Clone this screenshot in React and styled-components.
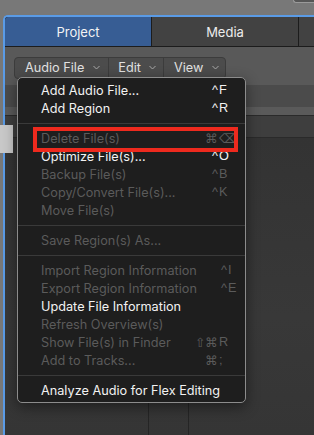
import styled, { createGlobalStyle } from "styled-components";

const GlobalStyle = createGlobalStyle`
  html, body {
    margin: 0;
    padding: 0;
    background: #787878;
  }
  body {
    font-family: Inter, "Liberation Sans", "DejaVu Sans", sans-serif;
    -webkit-font-smoothing: antialiased;
  }
`;

const Screen = styled.div`
  position: relative;
  width: 314px;
  height: 435px;
  overflow: hidden;
  display: flex;
  flex-direction: column;
  background: #787878;
`;

const TopStrip = styled.div`
  height: 15px;
  flex: none;
  display: flex;
  justify-content: flex-end;
  align-items: flex-start;
`;

const OtherWindow = styled.div`
  width: 20px;
  height: 2px;
  background: #565656;
  border: 1px solid #9a9a9a;
  border-top: none;
  border-right: none;
  border-bottom-left-radius: 4px;
`;

const Window = styled.div`
  flex: 1;
  margin-left: 3px;
  border-left: 2px solid #5a9be6;
  border-top: 2px solid #5a9be6;
  border-top-left-radius: 5px;
  background: #343434;
  display: flex;
  flex-direction: column;
  overflow: hidden;
`;

const TabBar = styled.div`
  height: 29px;
  flex: none;
  display: grid;
  grid-template-columns: 146px 146px 1fr;
  gap: 1px;
  background: #1c1c1c;
  border-bottom: 1px solid #1c1c1c;
`;

const Tab = styled.div`
  display: flex;
  align-items: center;
  justify-content: center;
  font-size: 13px;
  color: ${(p) => (p.$active ? "#f4f4f4" : "#ececec")};
  background: ${(p) => (p.$active ? "#375d94" : "#424242")};
`;

const Toolbar = styled.div`
  height: 38px;
  flex: none;
  box-sizing: border-box;
  padding: 9px 0 0 9px;
  background: #595959;
`;

const ButtonGroup = styled.div`
  display: inline-flex;
  height: 20px;
  border-radius: 4px;
  border: 1px solid #3c3c3c;
  background: #4c4c4c;
  overflow: hidden;
`;

const MenuButton = styled.div`
  display: flex;
  align-items: center;
  gap: ${(p) => p.$gap}px;
  padding: 0 ${(p) => p.$padRight}px 0 ${(p) => p.$padLeft}px;
  font-size: 12.7px;
  color: #e2e2e2;
  & + & {
    border-left: 1px solid #3c3c3c;
  }
`;

const Chevron = () => (
  <svg width="7" height="5" viewBox="0 0 7 5">
    <polyline
      points="0.5,1 3.5,4 6.5,1"
      fill="none"
      stroke="#a8a8a8"
      strokeWidth="1"
    />
  </svg>
);

const HeaderRow = styled.div`
  height: 22px;
  flex: none;
  background: #4b4b4b;
`;

const ColumnHead = styled.div`
  height: 8px;
  flex: none;
  background: #5a5a5a;
  border-bottom: 1px solid #2a2a2a;
`;

const ListRow = styled.div`
  height: 21px;
  flex: none;
  background: #3e3e3e;
  border-bottom: 1px solid #2a2a2a;
`;

const ListBody = styled.div`
  flex: 1;
  display: grid;
  grid-template-columns: 144px 40px 1fr;
  background: linear-gradient(#333333, #383838 60%, #353535);
`;

const Column = styled.div`
  border-right: ${(p) => (p.$divider ? "1px solid #252525" : "none")};
`;

const Menu = styled.div`
  position: absolute;
  left: 17px;
  top: 77px;
  width: 229px;
  box-sizing: border-box;
  padding: 3px 0;
  background: #1e1e1e;
  border: 1px solid #8c8c8c;
  border-radius: 5px;
  box-shadow: 0 4px 14px rgba(0, 0, 0, 0.45);
`;

const Item = styled.div`
  height: 18px;
  display: grid;
  grid-template-columns: 1fr 30px 27px;
  align-items: center;
  padding-left: 23px;
  font-size: 12.7px;
  white-space: nowrap;
  color: ${(p) => (p.$disabled ? "#5b5b5b" : "#f2f2f2")};
`;

const Mods = styled.span`
  text-align: right;
  font-family: "Liberation Sans", "DejaVu Sans", sans-serif;
`;

const Key = styled.span`
  padding-left: 1px;
  font-family: "Liberation Sans", "DejaVu Sans", sans-serif;
`;

const Separator = styled.div`
  height: 12px;
  display: flex;
  align-items: center;
  &::after {
    content: "";
    flex: 1;
    height: 1px;
    background: #3a3a3a;
  }
`;

const Highlight = styled.div`
  position: absolute;
  left: 33px;
  top: 127px;
  width: 205px;
  height: 25px;
  box-sizing: border-box;
  border: 4px solid #ee2a1e;
`;

const Fragment = styled.div`
  position: absolute;
  left: 0;
  top: 125px;
  width: 13px;
  height: 28px;
  background: #c8c8c8;
`;

const menu = [
  { label: "Add Audio File...", mods: "^", key: "F" },
  { label: "Add Region", mods: "^", key: "R" },
  "sep",
  { label: "Delete File(s)", mods: "⌘", key: "⌫", disabled: true },
  { label: "Optimize File(s)...", mods: "^", key: "O" },
  { label: "Backup File(s)", mods: "^", key: "B", disabled: true },
  { label: "Copy/Convert File(s)...", mods: "^", key: "K", disabled: true },
  { label: "Move File(s)", disabled: true },
  "sep",
  { label: "Save Region(s) As...", disabled: true },
  "sep",
  { label: "Import Region Information", mods: "^", key: "I", disabled: true },
  { label: "Export Region Information", mods: "^", key: "E", disabled: true },
  { label: "Update File Information" },
  { label: "Refresh Overview(s)", disabled: true },
  { label: "Show File(s) in Finder", mods: "⇧⌘", key: "R", disabled: true },
  { label: "Add to Tracks...", mods: "⌘", key: ";", disabled: true },
  "sep",
  { label: "Analyze Audio for Flex Editing" },
];

const App = () => {
  return (
    <>
      <GlobalStyle />
      <Screen>
        <TopStrip>
          <OtherWindow />
        </TopStrip>
        <Window>
          <TabBar>
            <Tab $active>Project</Tab>
            <Tab>Media</Tab>
            <Tab />
          </TabBar>
          <Toolbar>
            <ButtonGroup>
              <MenuButton $padLeft={10} $padRight={8} $gap={9}>
                Audio File <Chevron />
              </MenuButton>
              <MenuButton $padLeft={9} $padRight={7} $gap={8}>
                Edit <Chevron />
              </MenuButton>
              <MenuButton $padLeft={10} $padRight={6} $gap={9}>
                View <Chevron />
              </MenuButton>
            </ButtonGroup>
          </Toolbar>
          <HeaderRow />
          <ColumnHead />
          <ListRow />
          <ListBody>
            <Column $divider />
            <Column $divider />
            <Column />
          </ListBody>
        </Window>
        <Fragment />
        <Menu>
          {menu.map((x, i) =>
            x === "sep" ? (
              <Separator key={`sep-${i}`} />
            ) : (
              <Item key={`item-${i}`} $disabled={x.disabled}>
                <span>{x.label}</span>
                <Mods>{x.mods}</Mods>
                <Key>{x.key}</Key>
              </Item>
            )
          )}
        </Menu>
        <Highlight />
      </Screen>
    </>
  );
};

export default App;
